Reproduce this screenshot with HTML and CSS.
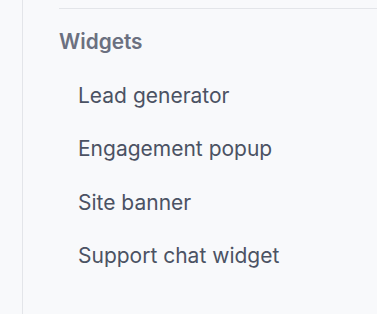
FILE: index.html
```html
<!DOCTYPE html>
<html>
<head>
<meta charset="utf-8">
<link rel="stylesheet" href="styles.css">
</head>
<body>
<nav class="sidebar">
  <div class="section">
    <h3 class="section-title">Widgets</h3>
    <ul class="menu">
      <li class="menu-item">Lead generator</li>
      <li class="menu-item">Engagement popup</li>
      <li class="menu-item">Site banner</li>
      <li class="menu-item">Support chat widget</li>
    </ul>
  </div>
</nav>
</body>
</html>
```
FILE: styles.css
```css
html, body {
  margin: 0;
  padding: 0;
  height: 100%;
  background: #f8f9fb;
}
body {
  font-family: Inter, "Noto Sans", sans-serif;
}
.sidebar {
  margin-left: 22px;
  border-left: 1px solid #e3e5e9;
  min-height: 100%;
  padding-left: 36px;
  padding-top: 8px;
  box-sizing: border-box;
}
.section {
  border-top: 1px solid #e3e5e9;
}
.section-title {
  margin: 0;
  padding-top: 20.5px;
  font-size: 20.8px;
  font-weight: 600;
  color: #6b7080;
  line-height: 24px;
}
.menu {
  list-style: none;
  margin: 0;
  padding: 30.5px 0 0 19px;
  display: flex;
  flex-direction: column;
  gap: 29.3px;
}
.menu-item {
  font-size: 21px;
  line-height: 24px;
  color: #4b5263;
}
```
